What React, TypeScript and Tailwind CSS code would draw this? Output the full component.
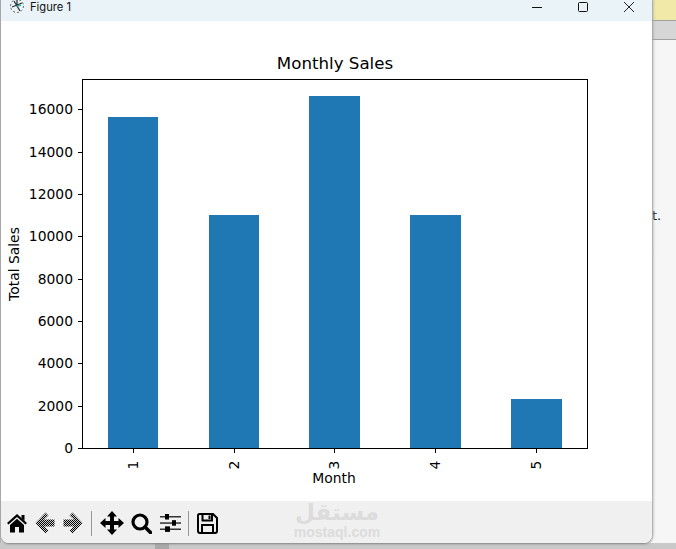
import React from "react";

const yTicks = [0, 2000, 4000, 6000, 8000, 10000, 12000, 14000, 16000];
const bars = [
  { label: "1", x: 108, w: 50, top: 117 },
  { label: "2", x: 209, w: 50, top: 215 },
  { label: "3", x: 309, w: 51, top: 96 },
  { label: "4", x: 410, w: 51, top: 215 },
  { label: "5", x: 511, w: 51, top: 399 },
];
const font = "'DejaVu Sans', sans-serif";

function Chart() {
  return (
    <svg width="651" height="480" viewBox="1 21 651 480" className="block" fontFamily={font} fill="#000">
      <text x="335" y="69" textAnchor="middle" fontSize="16.67">Monthly Sales</text>
      {bars.map((b) => (
        <rect key={b.label} x={b.x} y={b.top} width={b.w} height={448 - b.top} fill="#1f77b4" />
      ))}
      <rect x="82.5" y="79.5" width="505" height="369" fill="none" stroke="#000" strokeWidth="1" />
      {yTicks.map((t) => {
        const y = 448 - (t / 16000) * 338.8;
        return (
          <g key={t}>
            <line x1="78" x2="82" y1={Math.round(y) + 0.5} y2={Math.round(y) + 0.5} stroke="#000" />
            <text x="73" y={Math.round(y) + 5} textAnchor="end" fontSize="13.89">{t}</text>
          </g>
        );
      })}
      {bars.map((b) => (
        <g key={b.label}>
          <line x1={b.x + 25.5} x2={b.x + 25.5} y1="449" y2="453" stroke="#000" />
          <text transform={`translate(${b.x + 30} 465) rotate(-90)`} textAnchor="middle" fontSize="13.89">{b.label}</text>
        </g>
      ))}
      <text x="334" y="483" textAnchor="middle" fontSize="13.89">Month</text>
      <text transform="translate(19 264) rotate(-90)" textAnchor="middle" fontSize="13.89">Total Sales</text>
    </svg>
  );
}

function Home() {
  return (
    <svg width="20" height="20" viewBox="0 0 20 20" className="ml-[6px]">
      <path d="M10 1 L20 10 L18.5 11.5 L10 4 L1.5 11.5 L0 10 Z" fill="#000" />
      <path d="M14.5 2h3v6l-3-3Z" fill="#000" />
      <path d="M3 12 L10 5.8 L17 12 V19.5 H12 V14 H8 V19.5 H3 Z" fill="#000" />
    </svg>
  );
}

function Arrow({ flip }: { flip?: boolean }) {
  const id = flip ? "ditherR" : "ditherL";
  return (
    <svg width="20" height="22" viewBox="0 0 20 22" className="ml-[8px]" style={flip ? { transform: "scaleX(-1)" } : undefined}>
      <defs>
        <pattern id={id} width="2" height="2" patternUnits="userSpaceOnUse">
          <rect width="2" height="2" fill="#cfcfcf" />
          <rect width="1" height="1" fill="#000" />
          <rect x="1" y="1" width="1" height="1" fill="#000" />
        </pattern>
      </defs>
      <path d="M10.5 0.5 L13.5 3.5 L9 7.5 H19.5 V14.5 H9 L13.5 18.5 L10.5 21.5 L0.5 11 Z" fill={`url(#${id})`} />
    </svg>
  );
}

function Move() {
  return (
    <svg width="24" height="24" viewBox="0 0 24 24" fill="#000" className="ml-[8px]">
      <path d="M12 0 L17 5.5 H14 V10 H18.5 V7 L24 12 L18.5 17 V14 H14 V18.5 H17 L12 24 L7 18.5 H10 V14 H5.5 V17 L0 12 L5.5 7 V10 H10 V5.5 H7 Z" />
    </svg>
  );
}

function Zoom() {
  return (
    <svg width="21" height="21" viewBox="0 0 21 21" fill="none" stroke="#000" className="ml-[7px]">
      <circle cx="9" cy="9" r="7" strokeWidth="3.2" />
      <line x1="14" y1="14" x2="19.5" y2="19.5" strokeWidth="3.6" strokeLinecap="round" />
    </svg>
  );
}

function Sliders() {
  return (
    <svg width="21" height="20" viewBox="0 0 21 20" fill="#000" className="ml-[8px]">
      <rect y="3" width="21" height="1.5" fill="#333" />
      <rect y="9.3" width="21" height="1.5" fill="#333" />
      <rect y="15.5" width="21" height="1.5" fill="#333" />
      <rect x="5" y="1" width="4" height="5.5" />
      <rect x="12" y="7.2" width="4" height="5.5" />
      <rect x="5" y="13.4" width="5" height="5.5" />
    </svg>
  );
}

function Save() {
  return (
    <svg width="21" height="21" viewBox="0 0 21 21" fill="none" stroke="#000" strokeWidth="2" className="ml-[8px]">
      <path d="M2.5 1 H16 L20 5 V18 a2 2 0 0 1 -2 2 H3 a2 2 0 0 1 -2 -2 V2.5 a1.5 1.5 0 0 1 1.5 -1.5 Z" />
      <path d="M5.5 1 V7.5 H15 V1" />
      <path d="M5 20 V12 H16 V20" />
      <rect x="11.5" y="2.5" width="2" height="3.5" fill="#000" stroke="none" />
    </svg>
  );
}

export default function App() {
  return (
    <div
      className="relative w-[676px] h-[549px] overflow-hidden bg-gradient-to-r from-[#d8d8d8] via-[#f2f2f2] to-[#f6f6f6]"
      style={{ fontFamily: font }}
    >
      <div className="absolute left-0 top-0 w-[1px] h-full bg-[#b4b4b4]" />
      <div className="absolute left-0 bottom-0 w-full h-[6px] bg-[#c9c9c9]" />
      <div className="absolute left-[155px] bottom-0 w-[14px] h-[6px] bg-[#a9a9a9]" />
      <div className="absolute left-[652px] top-0 w-[24px] h-[20px] bg-[#f0e9a8]" />
      <div className="absolute left-[652px] top-[20px] w-[24px] h-[20px] bg-[#d6d6d6] border-y border-[#a0a0a0]" />
      <span className="absolute left-[652px] top-[206px] text-[13px] text-[#111111]">t.</span>

      <div className="absolute left-[1px] -top-[1px] w-[651px] h-[544px] bg-white rounded-b-lg flex flex-col overflow-hidden shadow-[0_1px_2px_#888888,1px_0_3px_#aaaaaa]">
        <div className="h-[22px] shrink-0 bg-[#eaf4f8] flex items-center">
          <svg width="18" height="16" viewBox="0 0 18 16" className="ml-[8px] -mt-[6px]" fill="none">
            <circle cx="8" cy="7" r="6.5" stroke="#666" strokeWidth="1" strokeDasharray="2 2" />
            <path d="M5 2 L11 12 M3 8 L13 4 M8 1 V7" stroke="#333" strokeWidth="1.3" />
            <path d="M8 7 L12 6" stroke="#2aa" strokeWidth="1.3" />
          </svg>
          <span className="ml-[3px] -mt-[6px] text-[11.2px] text-[#111111]" style={{ fontFamily: "'Inter', 'Noto Sans', sans-serif" }}>Figure 1</span>
          <div className="ml-auto flex items-center -mt-[6px]">
            <svg width="12" height="12" viewBox="0 0 12 12" stroke="#111"><line x1="1" x2="11" y1="6.5" y2="6.5" /></svg>
            <svg width="12" height="12" viewBox="0 0 12 12" fill="none" stroke="#111" className="ml-[34px]"><rect x="1.5" y="1.5" width="9" height="9" rx="1" /></svg>
            <svg width="12" height="12" viewBox="0 0 12 12" stroke="#222" className="ml-[34px] mr-[17px]"><path d="M1 1 L11 11 M11 1 L1 11" /></svg>
          </div>
        </div>
        <div className="flex-1 min-h-0 bg-white">
          <Chart />
        </div>
        <div className="h-[42px] shrink-0 bg-[#f0f0f0] flex items-center pt-[2px]">
          <Home />
          <Arrow />
          <Arrow flip />
          <div className="w-px h-[25px] bg-[#999999] ml-[8px]" />
          <Move />
          <Zoom />
          <Sliders />
          <div className="w-px h-[25px] bg-[#999999] ml-[7px]" />
          <Save />
        </div>
      </div>

      <div className="absolute left-[286px] top-[501px] w-[102px] flex flex-col items-center gap-[4px] pointer-events-none">
        <span className="h-[22px] text-[23px] leading-[22px] font-bold text-[#dcdcdc] whitespace-nowrap" style={{ fontFamily: "'DejaVu Sans', 'Noto Sans', sans-serif" }}>مستقل</span>
        <span className="h-[11px] text-[14px] leading-[11px] font-bold text-[#dcdcdc]" style={{ fontFamily: "'Liberation Sans', sans-serif" }}>mostaql.com</span>
      </div>
    </div>
  );
}
